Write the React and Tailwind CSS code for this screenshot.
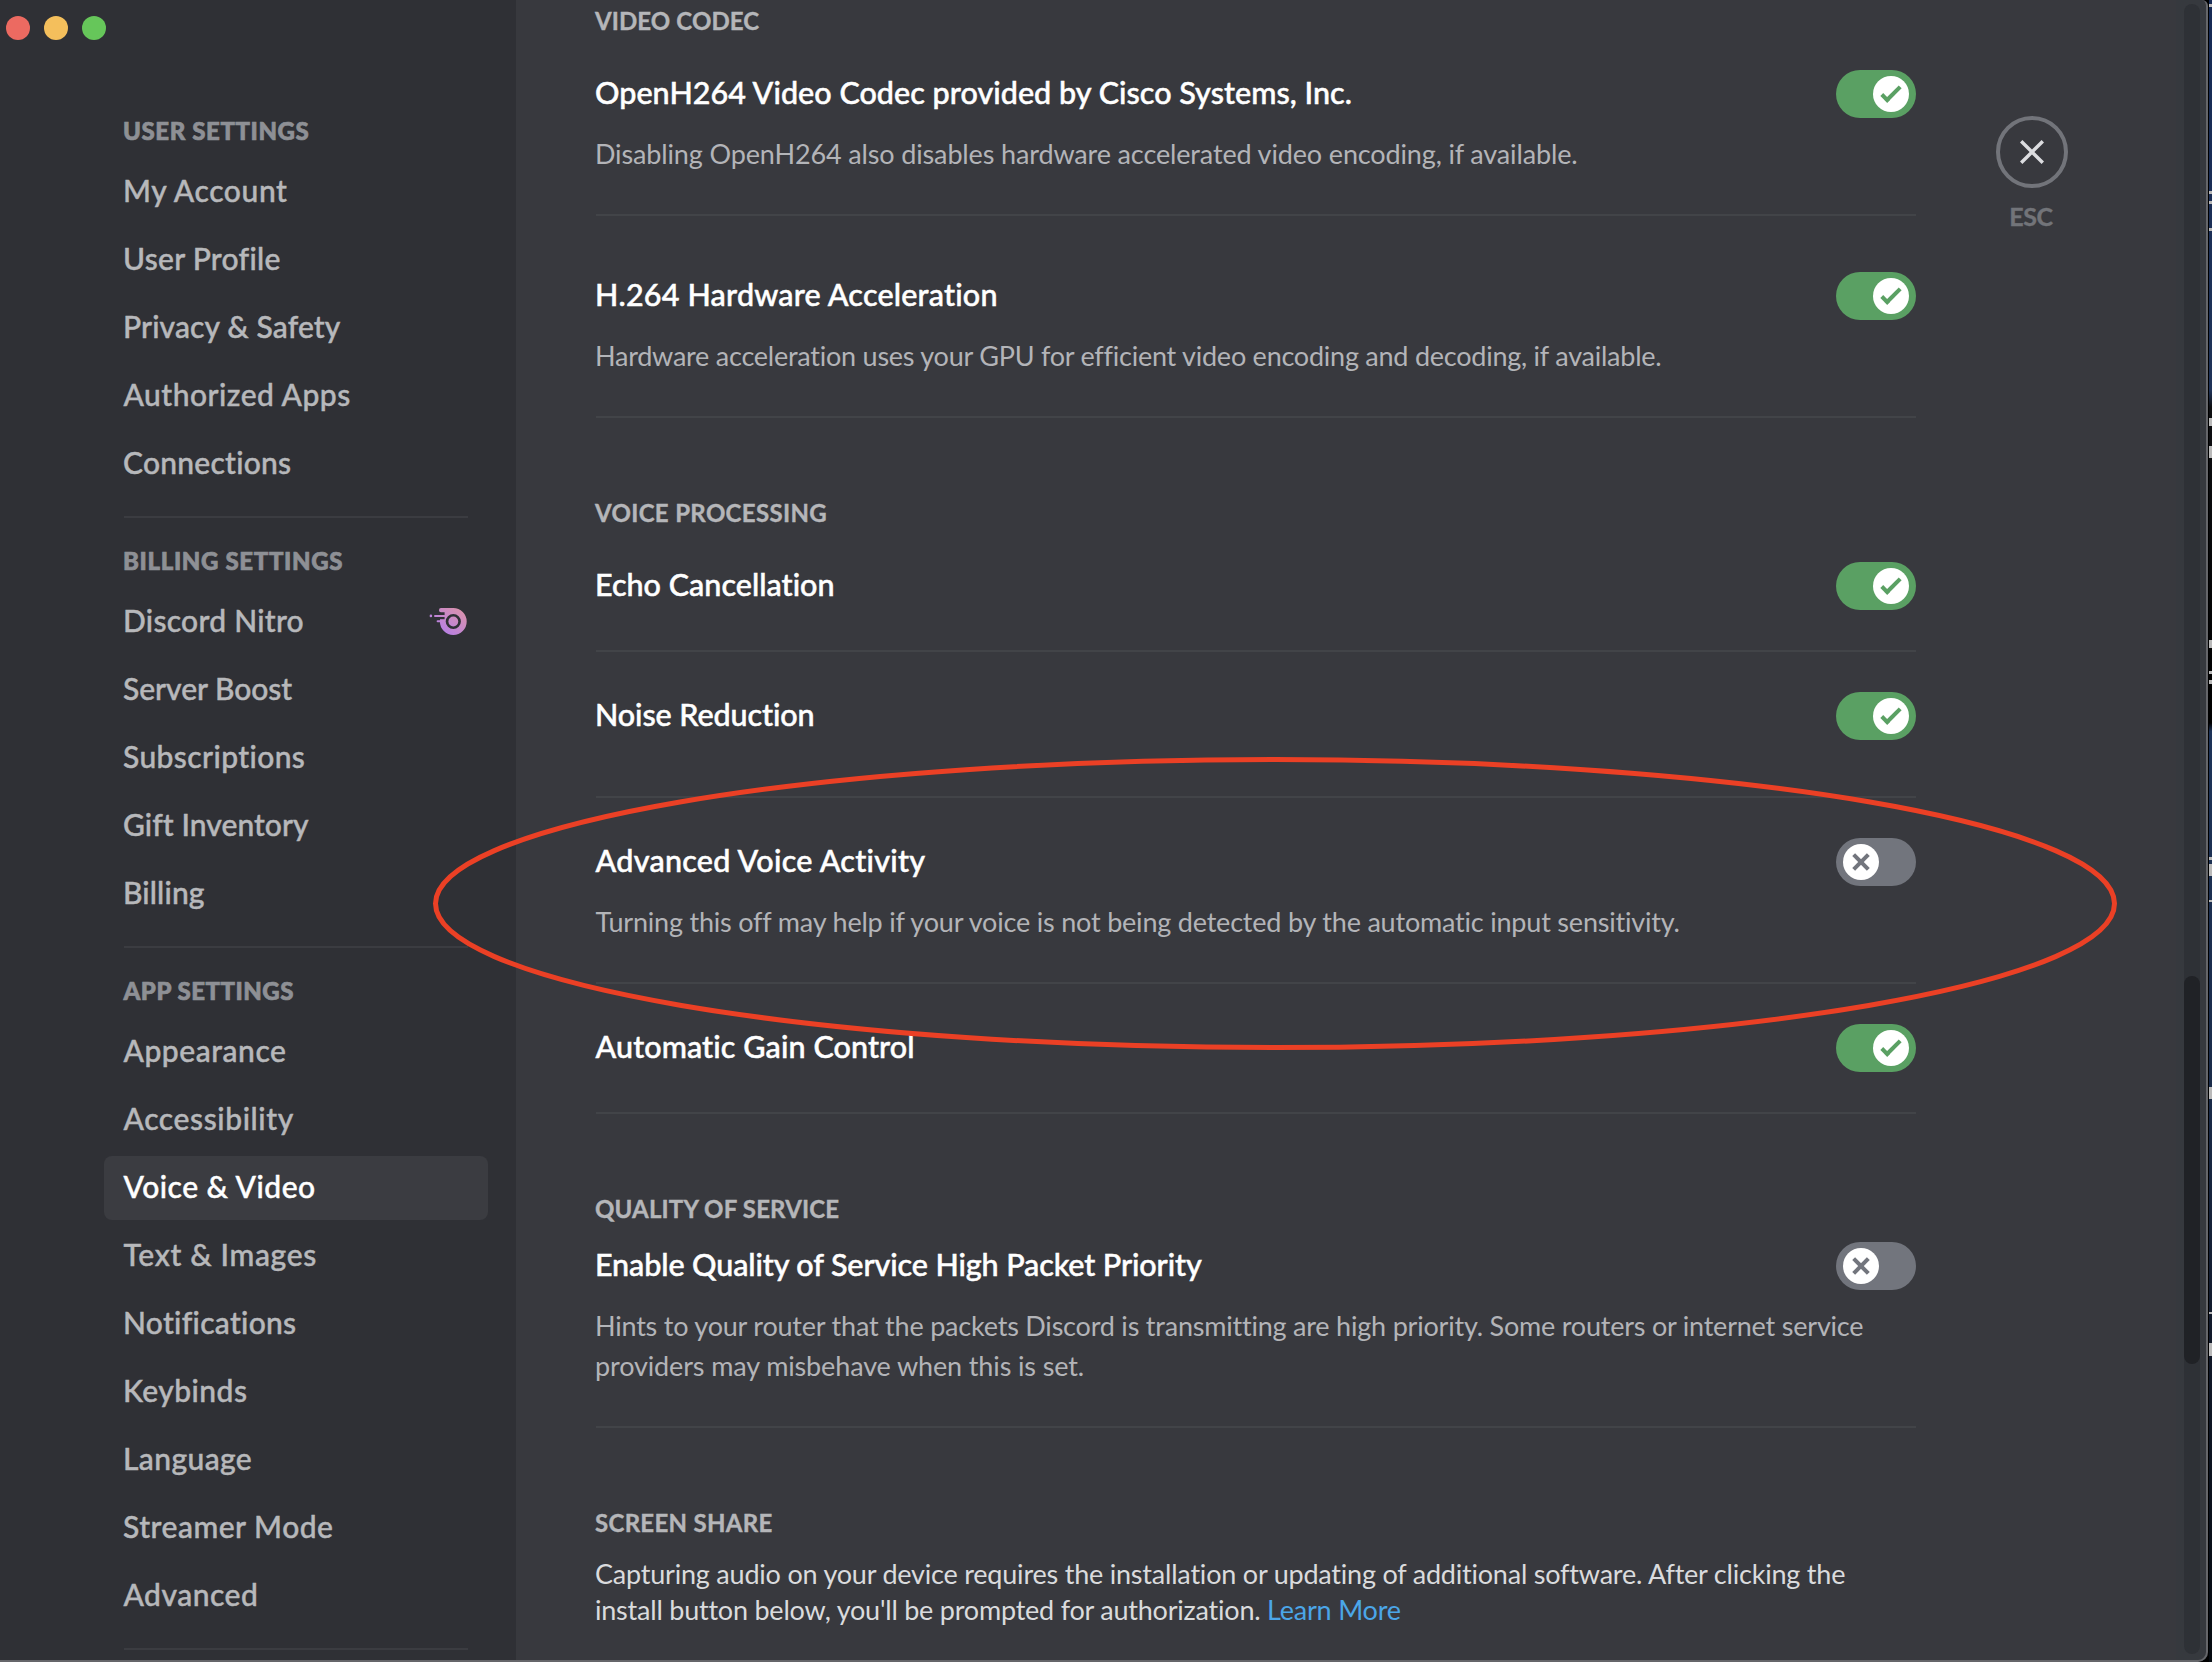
const NAV = [
  {
    title: "USER SETTINGS",
    titleClass: "-ml-[1px] tracking-[0.6px]",
    items: [
      { label: "My Account", cls: "-ml-[1px] tracking-[0.6px]" },
      { label: "User Profile", cls: "-ml-[1px] tracking-[0.28px]" },
      { label: "Privacy & Safety", cls: "-ml-[1px] tracking-[0.14px]" },
      { label: "Authorized Apps", cls: "-ml-[0.5px] tracking-[0.5px]" },
      { label: "Connections", cls: "-ml-[1px] tracking-[0.25px]" },
    ],
  },
  {
    title: "BILLING SETTINGS",
    titleClass: "-ml-[1px] tracking-[0.66px]",
    items: [
      { label: "Discord Nitro", cls: "-ml-[1px] tracking-[0.28px]", nitro: true },
      { label: "Server Boost", cls: "-ml-[1px] tracking-[-0.02px]" },
      { label: "Subscriptions", cls: "-ml-[1px] tracking-[0.4px]" },
      { label: "Gift Inventory", cls: "-ml-[1px] tracking-[0.06px]" },
      { label: "Billing", cls: "-ml-[1px] tracking-[0.15px]" },
    ],
  },
  {
    title: "APP SETTINGS",
    titleClass: "-ml-[0.5px] tracking-[0.5px]",
    items: [
      { label: "Appearance", cls: "-ml-[0.5px] tracking-[0.55px]" },
      { label: "Accessibility", cls: "-ml-[0.5px] tracking-[0.6px]" },
      { label: "Voice & Video", cls: "-ml-[0.5px] tracking-[0.5px]", active: true },
      { label: "Text & Images", cls: "-ml-[0.5px] tracking-[0.66px]" },
      { label: "Notifications", cls: "-ml-[1px] tracking-[0.3px]" },
      { label: "Keybinds", cls: "-ml-[1px] tracking-[0.45px]" },
      { label: "Language", cls: "-ml-[1px] tracking-[0.4px]" },
      { label: "Streamer Mode", cls: "-ml-[1px] tracking-[0.52px]" },
      { label: "Advanced", cls: "-ml-[0.5px] tracking-[0.5px]" },
    ],
  },
];

function NitroIcon() {
  return (
    <svg width="40" height="32" viewBox="0 0 40 32">
      <defs>
        <linearGradient id="nitro" gradientUnits="userSpaceOnUse" x1="36" y1="3" x2="16" y2="28">
          <stop offset="0" stopColor="#dc93a8" />
          <stop offset="1" stopColor="#b67fe6" />
        </linearGradient>
      </defs>
      <circle cx="25.3" cy="15.5" r="10.5" fill="none" stroke="url(#nitro)" strokeWidth="5.8" />
      <circle cx="25.3" cy="15.5" r="4.9" fill="url(#nitro)" />
      <path d="M9 4H16.6V13.2H9Z" fill="#2f3035" />
      <path d="M13 2.1H26V7H18.5V6.2H13A2 2 0 0 1 13 2.1Z" fill="url(#nitro)" />
      <rect x="6" y="8.9" width="11.5" height="2" rx="1" fill="url(#nitro)" />
      <rect x="8.6" y="14.2" width="7" height="2" rx="1" fill="url(#nitro)" />
      <circle cx="2.9" cy="9.9" r="1.3" fill="url(#nitro)" />
    </svg>
  );
}

function Sidebar() {
  return (
    <nav className="flex w-[516px] shrink-0 flex-col bg-[#2f3035]">
      <div className="flex h-[104px] shrink-0 items-start gap-[14px] pl-[6px] pt-[16px]">
        <span className="size-6 rounded-full bg-[#ec6a61]" />
        <span className="size-6 rounded-full bg-[#f4bf5c]" />
        <span className="size-6 rounded-full bg-[#66c65a]" />
      </div>
      {NAV.map((group) => (
        <div key={group.title} className="ml-[104px] w-[384px] shrink-0">
          <h2 className="h-[56px] px-5 pt-[11px] text-[24px] font-black leading-[32px] text-[#8e9095] [-webkit-text-stroke:0.7px]">
            <span className={`inline-block ${group.titleClass}`}>{group.title}</span>
          </h2>
          <ul>
            {group.items.map((item) => (
              <li
                key={item.label}
                className={`mb-1 flex h-16 items-center justify-between rounded-lg px-5 text-[30px] font-medium leading-[40px] [-webkit-text-stroke:0.45px] ${
                  item.active ? "bg-[#3b3c41] text-white" : "text-[#b7b8bb]"
                }`}
              >
                <span className={`mb-[4px] ${item.cls}`}>{item.label}</span>
                {item.nitro && <NitroIcon />}
              </li>
            ))}
          </ul>
          <div className="mx-5 mb-4 mt-5 h-[2px] bg-[#3b3c41]" />
        </div>
      ))}
    </nav>
  );
}

function Toggle({ on }) {
  return (
    <span
      className={`flex h-12 w-20 shrink-0 items-center rounded-full px-[7px] ${
        on ? "justify-end bg-[#5aa063]" : "justify-start bg-[#72757d]"
      }`}
    >
      <span className="size-9 rounded-full bg-white">
        <svg viewBox="0 0 20 20" className="size-9">
          {on ? (
            <g fill="#5aa063">
              <path d="M7.896 14.854 6.305 13.263 14.31 5.258 15.901 6.849Z" />
              <path d="M4.086 11.09 5.677 9.499 9.449 13.27 7.858 14.861Z" />
            </g>
          ) : (
            <g fill="#72757d">
              <path d="M5.132 6.73 6.723 5.139 14.855 13.27 13.264 14.861Z" />
              <path d="M13.27 5.139 14.861 6.73 6.73 14.861 5.139 13.27Z" />
            </g>
          )}
        </svg>
      </span>
    </span>
  );
}

function Heading({ children, className }) {
  return (
    <h2 className="h-8 text-[24px] font-bold leading-[30px] text-[#b5b6b9] [-webkit-text-stroke:0.4px]">
      <span className={`inline-block ${className}`}>{children}</span>
    </h2>
  );
}

function Setting({ title, titleClass, on, children, className = "" }) {
  return (
    <section className={`border-b-2 border-[#424448] pb-10 ${className}`}>
      <div className="flex h-12 items-start justify-between">
        <h3 className="text-[30.5px] font-medium leading-[44px] text-white [-webkit-text-stroke:0.5px]">
          <span className={`inline-block ${titleClass}`}>{title}</span>
        </h3>
        <Toggle on={on} />
      </div>
      {children && (
        <div className="mt-4 flex flex-col whitespace-nowrap text-[27px] leading-[40px] text-[#b3b4b8]">
          {children}
        </div>
      )}
    </section>
  );
}

function Content() {
  return (
    <main className="ml-[80px] w-[1320px] shrink-0 pt-[6px]">
      <Heading className="-ml-[1px] tracking-[0.1px]">VIDEO CODEC</Heading>
      <Setting
        className="mt-8"
        title="OpenH264 Video Codec provided by Cisco Systems, Inc."
        titleClass="-ml-[1px] tracking-[0.04px]"
        on
      >
        <span className="-ml-[1px] tracking-[-0.14px]">
          Disabling OpenH264 also disables hardware accelerated video encoding, if available.
        </span>
      </Setting>
      <Setting
        className="mt-14"
        title="H.264 Hardware Acceleration"
        titleClass="-ml-[1px] tracking-[0.2px]"
        on
      >
        <span className="-ml-[1px] tracking-[-0.24px]">
          Hardware acceleration uses your GPU for efficient video encoding and decoding, if available.
        </span>
      </Setting>

      <div className="mt-[80px]">
        <Heading className="-ml-[1px] tracking-[0.34px]">VOICE PROCESSING</Heading>
      </div>
      <Setting className="mt-8" title="Echo Cancellation" titleClass="-ml-[1px] tracking-[0.02px]" on />
      <Setting
        className="mt-10 pb-14"
        title="Noise Reduction"
        titleClass="-ml-[1px] tracking-[-0.08px]"
        on
      />
      <Setting className="mt-10" title="Advanced Voice Activity" titleClass="-ml-[0.5px] tracking-[0.28px]">
        <span className="-ml-[0.5px] tracking-[-0.2px]">
          Turning this off may help if your voice is not being detected by the automatic input sensitivity.
        </span>
      </Setting>
      <Setting className="mt-10" title="Automatic Gain Control" titleClass="-ml-[0.5px] tracking-[0.1px]" on />

      <div className="mt-[80px]">
        <Heading className="-ml-[1px] tracking-[0.16px]">QUALITY OF SERVICE</Heading>
      </div>
      <Setting
        className="mt-4"
        title="Enable Quality of Service High Packet Priority"
        titleClass="-ml-[1px] tracking-[-0.1px]"
      >
        <span className="-ml-[1px] tracking-[-0.21px]">
          Hints to your router that the packets Discord is transmitting are high priority. Some routers or internet service
        </span>
        <span className="-ml-[1px] tracking-[-0.13px]">providers may misbehave when this is set.</span>
      </Setting>

      <div className="mt-[80px]">
        <Heading className="-ml-[1px] tracking-[0.3px]">SCREEN SHARE</Heading>
      </div>
      <div className="mt-4 flex flex-col whitespace-nowrap text-[27px] leading-[36px] text-[#dadbdd]">
        <span className="-ml-[1px] tracking-[-0.21px]">
          Capturing audio on your device requires the installation or updating of additional software. After clicking the
        </span>
        <span className="-ml-[1px] tracking-[-0.22px]">
          install button below, you'll be prompted for authorization.{" "}
          <a className="text-[#4ba6e8]">Learn More</a>
        </span>
      </div>
    </main>
  );
}

function CloseButton() {
  return (
    <div className="ml-[80px] flex w-[72px] flex-col items-center pt-[116px]">
      <button className="flex size-[72px] items-center justify-center rounded-full border-4 border-[#72747a]">
        <svg width="36" height="36" viewBox="0 0 24 24" fill="#dcdde0">
          <path d="M18.4 4L12 10.4L5.6 4L4 5.6L10.4 12L4 18.4L5.6 20L12 13.6L18.4 20L20 18.4L13.6 12L20 5.6L18.4 4Z" />
        </svg>
      </button>
      <span className="mr-[2px] mt-3 text-[25px] font-bold leading-[32px] tracking-[-0.4px] text-[#727479] [-webkit-text-stroke:0.4px]">
        ESC
      </span>
    </div>
  );
}

function Scrollbar() {
  return (
    <div className="ml-auto flex w-8 shrink-0 flex-col bg-[#36393e] pl-2 pt-1">
      <div className="h-[1650px] w-4 rounded-full bg-[#2e3136] pt-[972px]">
        <div className="h-[388px] w-4 rounded-full bg-[#202226]" />
      </div>
    </div>
  );
}

// Bright slivers of the desktop behind the window: [top, height].
const MARKS = [
  [4, 3], [191, 3], [201, 3], [228, 3], [418, 8], [446, 12], [640, 8], [671, 3],
  [680, 4], [857, 3], [864, 12], [900, 2], [1087, 12], [1312, 2], [1343, 13],
];

export default function App() {
  return (
    <div className="relative flex h-[1662px] w-[2212px] overflow-hidden bg-black font-['Lato',sans-serif] antialiased [font-variant-ligatures:none]">
      <div className="relative flex w-[2208px] shrink-0 overflow-hidden rounded-br-[10px] rounded-tr-[6px] bg-[#38393e]">
        <Sidebar />
        <Content />
        <CloseButton />
        <Scrollbar />
        <div className="pointer-events-none absolute inset-0 rounded-br-[10px] rounded-tr-[6px] border-b-2 border-r-2 border-[#65666a]" />
      </div>

      <svg width="3" height="1662" className="ml-[1px] shrink-0">
        <defs>
          <linearGradient id="desk" x1="0" y1="0" x2="0" y2="1">
            <stop offset="0" stopColor="#162a55" />
            <stop offset="0.235" stopColor="#1f3358" />
            <stop offset="0.245" stopColor="#0e0f12" />
            <stop offset="0.435" stopColor="#000000" />
            <stop offset="0.44" stopColor="#1d3358" />
            <stop offset="0.66" stopColor="#1a2b49" />
            <stop offset="0.8" stopColor="#121a2b" />
            <stop offset="1" stopColor="#050a10" />
          </linearGradient>
        </defs>
        <rect width="3" height="1662" fill="url(#desk)" />
        {MARKS.map(([y, h]) => (
          <rect key={y} x="0" y={y} width="3" height={h} fill="#b9b9b9" />
        ))}
      </svg>

      <svg
        className="pointer-events-none absolute left-0 top-0"
        width="2212"
        height="1662"
        viewBox="0 0 2212 1662"
        fill="none"
      >
        <ellipse cx="1275" cy="903.6" rx="839.5" ry="144" stroke="#eb4025" strokeWidth="5" />
      </svg>
    </div>
  );
}
